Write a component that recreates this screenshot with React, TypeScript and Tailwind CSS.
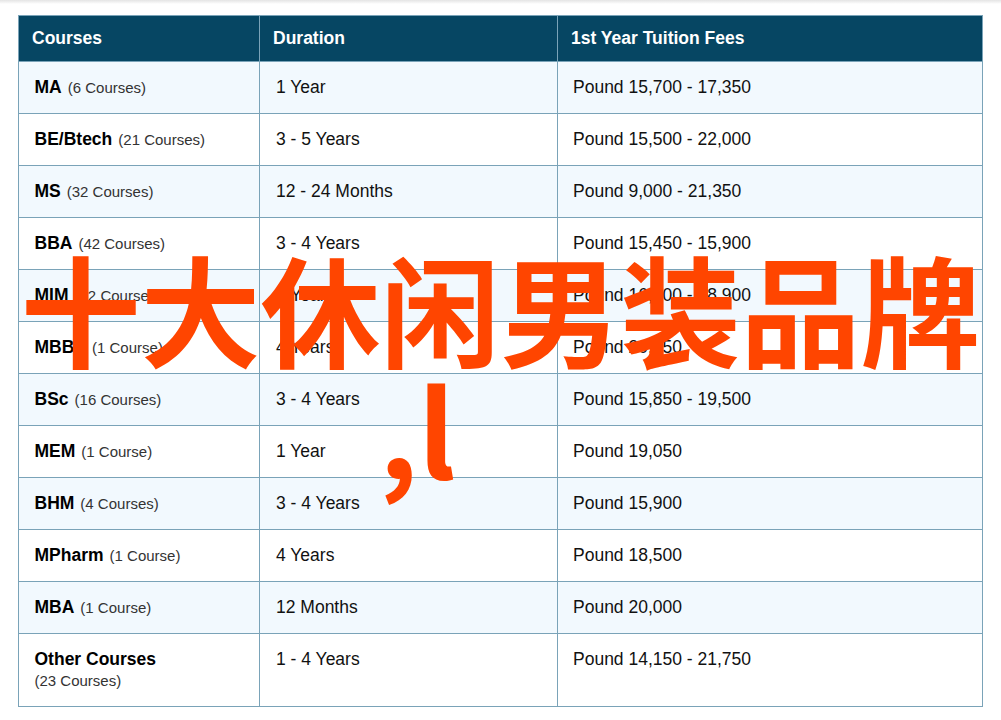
const rows = [
  { name: 'MA', count: '(6 Courses)', duration: '1 Year', fees: 'Pound 15,700 - 17,350' },
  { name: 'BE/Btech', count: '(21 Courses)', duration: '3 - 5 Years', fees: 'Pound 15,500 - 22,000' },
  { name: 'MS', count: '(32 Courses)', duration: '12 - 24 Months', fees: 'Pound 9,000 - 21,350' },
  { name: 'BBA', count: '(42 Courses)', duration: '3 - 4 Years', fees: 'Pound 15,450 - 15,900' },
  { name: 'MIM', count: '(12 Courses)', duration: '1 Year', fees: 'Pound 16,000 - 18,900' },
  { name: 'MBBS', count: '(1 Course)', duration: '4 Years', fees: 'Pound 20,950' },
  { name: 'BSc', count: '(16 Courses)', duration: '3 - 4 Years', fees: 'Pound 15,850 - 19,500' },
  { name: 'MEM', count: '(1 Course)', duration: '1 Year', fees: 'Pound 19,050' },
  { name: 'BHM', count: '(4 Courses)', duration: '3 - 4 Years', fees: 'Pound 15,900' },
  { name: 'MPharm', count: '(1 Course)', duration: '4 Years', fees: 'Pound 18,500' },
  { name: 'MBA', count: '(1 Course)', duration: '12 Months', fees: 'Pound 20,000' },
]

export default function App() {
  return (
    <div className="relative h-[720px] w-[1001px] overflow-hidden bg-white font-['Liberation_Sans',sans-serif]">
      <div className="h-[4px] bg-gradient-to-b from-[#e4e4e4] to-white" />
      <div className="pl-[18px] pt-[11px]">
        <table className="w-[965px] table-fixed border-collapse border border-[#7aa3b8] text-[17.5px] text-[#111]">
          <colgroup>
            <col className="w-[241px]" />
            <col className="w-[298px]" />
            <col />
          </colgroup>
          <thead>
            <tr className="h-[46px] bg-[#064663] text-left text-[17.5px] font-bold text-white">
              <th className="border border-[#7aa3b8] pl-[13px]">Courses</th>
              <th className="border border-[#7aa3b8] pl-[13px]">Duration</th>
              <th className="border border-[#7aa3b8] pl-[13px]">1st Year Tuition Fees</th>
            </tr>
          </thead>
          <tbody>
            {rows.map((row, i) => (
              <tr key={row.name} className={i % 2 === 0 ? 'h-[52px] bg-[#f2f9fe]' : 'h-[52px] bg-white'}>
                <td className="border border-[#7aa3b8] pl-[15.5px]">
                  <span className="font-bold text-black">{row.name}</span>
                  <span className="ml-[6px] text-[15px] text-[#333]">{row.count}</span>
                </td>
                <td className="border border-[#7aa3b8] pl-[16px]">{row.duration}</td>
                <td className="border border-[#7aa3b8] pl-[15px]">{row.fees}</td>
              </tr>
            ))}
            <tr className="h-[73px] bg-white">
              <td className="border border-[#7aa3b8] pl-[15.5px]">
                <div className="mt-[-1px] font-bold leading-[22px] text-black">Other Courses</div>
                <div className="text-[15px] leading-[22px] text-[#333]">(23 Courses)</div>
              </td>
              <td className="border border-[#7aa3b8] pb-[22px] pl-[16px]">1 - 4 Years</td>
              <td className="border border-[#7aa3b8] pb-[22px] pl-[15px]">Pound 14,150 - 21,750</td>
            </tr>
          </tbody>
        </table>
      </div>
      {/* orange caption lies over the table */}
      <div className="absolute left-0 top-[247px] w-[1001px] whitespace-nowrap font-['Noto_Sans_CJK_SC',sans-serif] text-[120px] leading-[120px] font-bold text-[#ff4500]">
        <div className="text-center">十大休闲男装品牌</div>
        <div className="pl-[379px]">,l</div>
      </div>
    </div>
  )
}
